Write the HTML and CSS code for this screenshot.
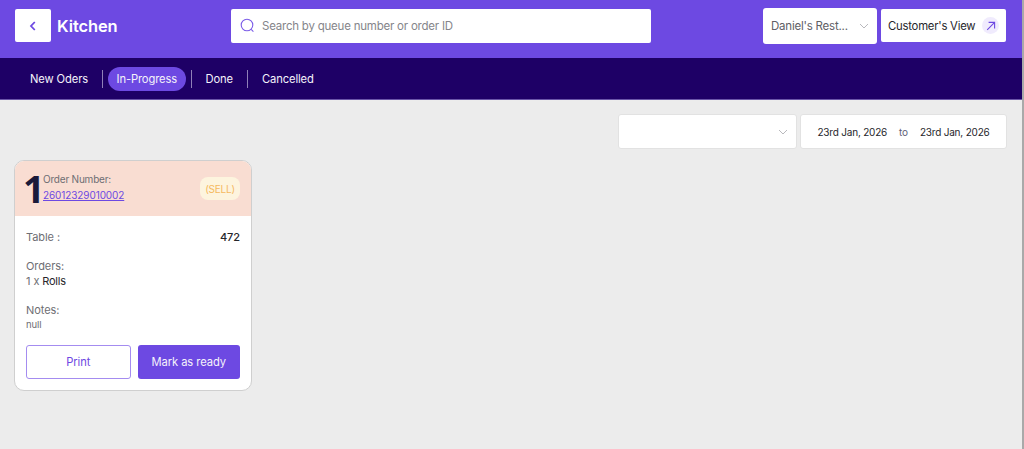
FILE: index.html
```html
<!DOCTYPE html>
<html lang="en">
<head>
    <meta charset="UTF-8">
    <meta name="viewport" content="width=device-width, initial-scale=1.0">
    <title>Kitchen</title>
    <link rel="stylesheet" href="styles.css">
</head>
<body>
    <div class="page">
        <header class="topbar">
            <button class="back-btn">
                <svg width="10" height="12" viewBox="0 0 10 12"><path d="M6.8 2 3 6 6.8 10" fill="none" stroke="#6d49e2" stroke-width="1.8"/></svg>
            </button>
            <div class="title">Kitchen</div>
            <div class="search">
                <svg width="15" height="15" viewBox="0 0 15 15"><circle cx="7" cy="7" r="5.8" fill="none" stroke="#7b5ce8" stroke-width="1.1"/><path d="M11.2 11.4 13.4 13.6" stroke="#7b5ce8" stroke-width="1.1"/></svg>
                <span>Search by queue number or order ID</span>
            </div>
            <div class="rest-select">
                <span>Daniel's Rest...</span>
                <svg class="chev" width="10" height="6" viewBox="0 0 10 6"><path d="M1 1 5 5 9 1" fill="none" stroke="#b9b9bd" stroke-width="1"/></svg>
            </div>
            <button class="view-btn">
                <span>Customer's View</span>
                <span class="view-icon">
                    <svg width="10" height="10" viewBox="0 0 10 10"><path d="M1.2 8.8 8.6 1.4M2.6 1.4H8.6V7.4" fill="none" stroke="#6d49e2" stroke-width="1.1"/></svg>
                </span>
            </button>
        </header>

        <nav class="tabs">
            <a class="tab">New Oders</a>
            <span class="sep"></span>
            <a class="tab active">In-Progress</a>
            <span class="sep"></span>
            <a class="tab">Done</a>
            <span class="sep"></span>
            <a class="tab">Cancelled</a>
        </nav>

        <main class="content">
            <div class="filters">
                <div class="filter-select">
                    <svg class="chev" width="10" height="6" viewBox="0 0 10 6"><path d="M1 1 5 5 9 1" fill="none" stroke="#b9b9bd" stroke-width="1"/></svg>
                </div>
                <div class="date-range">
                    <span>23rd Jan, 2026</span>
                    <span class="to">to</span>
                    <span>23rd Jan, 2026</span>
                </div>
            </div>

            <div class="card">
                <div class="card-head">
                    <div class="queue">1</div>
                    <div class="order-info">
                        <div class="order-label">Order Number:</div>
                        <a class="order-link">26012329010002</a>
                    </div>
                    <div class="sell">(SELL)</div>
                </div>
                <div class="card-body">
                    <div class="table-row">
                        <span class="muted">Table :</span>
                        <span class="table-no">472</span>
                    </div>
                    <div class="block">
                        <div class="muted">Orders:</div>
                        <div class="muted">1 x <span class="item">Rolls</span></div>
                    </div>
                    <div class="block">
                        <div class="muted">Notes:</div>
                        <div class="note">null</div>
                    </div>
                    <div class="actions">
                        <button class="btn btn-outline">Print</button>
                        <button class="btn btn-fill">Mark as ready</button>
                    </div>
                </div>
            </div>
        </main>
    </div>
</body>
</html>
```

FILE: styles.css
```css
* {
    box-sizing: border-box;
}
html, body {
    height: 100%;
}
body {
    margin: 0;
    font-family: Inter, "Noto Sans", sans-serif;
    font-size: 11.5px;
    letter-spacing: -0.22px;
    background-color: #a9a9a9;
    overflow: hidden;
}
button {
    font-family: inherit;
    letter-spacing: inherit;
    border: none;
    padding: 0;
}
.page {
    width: 1022px;
    height: 449px;
    background-color: #ececec;
}
.topbar {
    height: 58px;
    background-color: #6d49e2;
    display: flex;
    align-items: center;
    padding: 0 16px 7px 15px;
}
.back-btn {
    width: 36px;
    height: 33px;
    background-color: white;
    border-radius: 2px;
    display: flex;
    align-items: center;
    justify-content: center;
}
.title {
    margin-left: 6px;
    width: 174px;
    color: white;
    font-size: 16.5px;
    font-weight: 600;
    letter-spacing: -0.1px;
}
.search {
    width: 420px;
    height: 34px;
    background-color: white;
    border-radius: 2px;
    display: flex;
    align-items: center;
    gap: 7px;
    padding-left: 9px;
    color: #85858a;
}
.rest-select {
    margin-left: auto;
    width: 114px;
    height: 36px;
    background-color: white;
    border-radius: 3px;
    display: flex;
    align-items: center;
    justify-content: space-between;
    padding: 0 8px;
    color: #606065;
}
.view-btn {
    margin-left: 4px;
    width: 125px;
    height: 33px;
    background-color: white;
    border-radius: 2px;
    display: flex;
    align-items: center;
    justify-content: space-between;
    padding: 0 7px;
    color: #26262b;
    font-size: 11.3px;
    white-space: nowrap;
}
.view-icon {
    width: 17px;
    height: 17px;
    border-radius: 50%;
    background-color: #f0ebfd;
    display: flex;
    align-items: center;
    justify-content: center;
}
.tabs {
    height: 42px;
    background-color: #1e0066;
    border-bottom: 1px solid #6a55a8;
    display: flex;
    align-items: center;
    padding-left: 16px;
    font-size: 11.2px;
    letter-spacing: -0.12px;
}
.tab {
    color: #f4f2fa;
    padding: 0 14px;
}
.tab.active {
    background-color: #6d49e2;
    border-radius: 13px;
    padding: 5px 8.5px;
    margin: 0 5px;
}
.sep {
    width: 1px;
    height: 18px;
    background-color: #8f80b8;
}
.content {
    padding: 14px 15px 0 14px;
}
.filters {
    display: flex;
    justify-content: flex-end;
    gap: 3px;
}
.filter-select {
    width: 179px;
    height: 35px;
    background-color: white;
    border: 1px solid #e2e2e2;
    border-radius: 3px;
    display: flex;
    align-items: center;
    justify-content: flex-end;
    padding-right: 8px;
}
.date-range {
    width: 207px;
    height: 35px;
    background-color: white;
    border: 1px solid #e2e2e2;
    border-radius: 3px;
    display: flex;
    align-items: center;
    justify-content: center;
    gap: 12px;
    font-size: 10px;
    letter-spacing: -0.2px;
    color: #26262b;
}
.to {
    color: #5e5e78;
}
.card {
    margin-top: 11px;
    width: 238px;
    height: 231px;
    background-color: white;
    border: 1px solid #cfcfcf;
    border-radius: 10px;
    overflow: hidden;
}
.card-head {
    height: 55px;
    background-color: #f9ddd2;
    display: flex;
    align-items: center;
    padding: 0 11px 0 8px;
}
.queue {
    font-family: "Open Sans", sans-serif;
    font-size: 38px;
    font-weight: 700;
    color: #1a1a3a;
    width: 20px;
    line-height: 37px;
}
.order-info {
    flex: 1;
    padding-bottom: 2px;
}
.order-label {
    font-size: 10px;
    letter-spacing: -0.2px;
    color: #6e6e73;
    line-height: 15px;
}
.order-link {
    font-size: 10px;
    letter-spacing: -0.1px;
    color: #6d49e2;
    text-decoration: underline;
    line-height: 17px;
}
.sell {
    width: 40px;
    height: 23px;
    background-color: #fdf4de;
    color: #f5b95f;
    border-radius: 8px;
    font-size: 10px;
    display: flex;
    align-items: center;
    justify-content: center;
}
.card-body {
    padding: 14px 11px 0 11px;
    font-size: 11px;
    letter-spacing: -0.08px;
}
.table-row {
    display: flex;
    justify-content: space-between;
    line-height: 15px;
}
.muted {
    color: #6e6e73;
    line-height: 15px;
}
.table-no {
    color: #26262b;
    font-weight: 500;
}
.block {
    margin-top: 14px;
}
.item {
    color: #26262b;
    letter-spacing: -0.25px;
}
.note {
    color: #6e6e73;
    font-size: 9.5px;
    line-height: 14px;
}
.actions {
    margin-top: 13px;
    display: flex;
    gap: 7px;
}
.btn {
    flex: 1;
    height: 34px;
    border-radius: 3px;
    font-size: 11.2px;
}
.btn-outline {
    background-color: white;
    border: 1px solid #a48cf0;
    color: #6d49e2;
}
.btn-fill {
    background-color: #6d49e2;
    color: #f4f2fa;
}
```
